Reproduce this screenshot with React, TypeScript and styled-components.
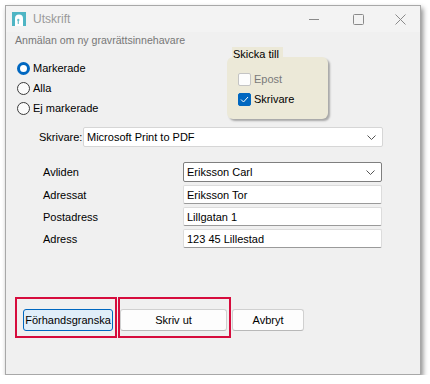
import React from "react";
import styled, { createGlobalStyle } from "styled-components";

const Global = createGlobalStyle`
  html, body { margin: 0; padding: 0; background: #ffffff; }
  body { font-family: "Liberation Sans", Arial, sans-serif; font-size: 11px; color: #000; }
  * { box-sizing: border-box; }
`;

const Window = styled.div`
  margin: 5px 0 0 5px;
  width: 416px;
  height: 370px;
  border: 1px solid #a8a8a8;
  background: #f0f0f0;
  box-shadow: 2px 3px 5px rgba(0, 0, 0, 0.45);
  display: flex;
  flex-direction: column;
`;

const TitleBar = styled.div`
  height: 26px;
  background: #f3f3f3;
  display: flex;
  align-items: center;
  padding-left: 6px;
`;

const TitleText = styled.span`
  margin-left: 7px;
  font-size: 12px;
  color: #9a9a9a;
`;

const Controls = styled.div`
  margin-left: auto;
  display: flex;
  height: 100%;
`;

const CtrlButton = styled.div<{ $w: number }>`
  width: ${(p) => p.$w}px;
  height: 100%;
  display: flex;
  align-items: center;
  justify-content: center;
`;

const Body = styled.div`
  flex: 1;
  padding: 2px 0 0 9px;
  display: flex;
  flex-direction: column;
`;

const Caption = styled.div`
  font-size: 10.6px;
  line-height: 13px;
  height: 13px;
  color: #777777;
`;

const TopRow = styled.div`
  display: grid;
  grid-template-columns: 212px 104px;
  height: 72px;
`;

const RadioList = styled.div`
  padding: 11px 0 0 2px;
  display: flex;
  flex-direction: column;
`;

const OptionRow = styled.label`
  height: 20px;
  display: flex;
  align-items: center;
  gap: 3px;
  font-size: 11px;
`;

const Radio = styled.span<{ $on?: boolean }>`
  width: 13px;
  height: 13px;
  border-radius: 50%;
  flex: none;
  background: ${(p) => (p.$on ? "#ffffff" : "#fbfbfb")};
  border: ${(p) => (p.$on ? "3.5px solid #0067c0" : "1px solid #3a3a3a")};
`;

const GroupWrap = styled.div`
  position: relative;
  padding-top: 10px;
`;

const GroupPanel = styled.div`
  width: 101px;
  height: 62px;
  background: #ece9d8;
  border-radius: 6px;
  box-shadow: 2px 2px 2px rgba(0, 0, 0, 0.3);
  padding: 12px 0 0 11px;
  display: flex;
  flex-direction: column;
`;

const GroupLabel = styled.span`
  position: absolute;
  top: 0;
  left: 5px;
  height: 15px;
  padding: 0 4px 0 1px;
  line-height: 15px;
  background: #ece9d8;
  font-size: 11px;
`;

const CheckRow = styled.label<{ $disabled?: boolean }>`
  height: 20px;
  display: flex;
  align-items: center;
  gap: 3px;
  font-size: 11px;
  color: ${(p) => (p.$disabled ? "#7a7a7a" : "#000")};
`;

const CheckBox = styled.span<{ $on?: boolean }>`
  width: 13px;
  height: 13px;
  flex: none;
  border-radius: 2px;
  background: ${(p) => (p.$on ? "#0067c0" : "#fdfdfd")};
  border: 1px solid ${(p) => (p.$on ? "#0067c0" : "#c4c4c4")};
  display: flex;
  align-items: center;
  justify-content: center;
`;

const PrinterRow = styled.div`
  margin-top: 8px;
  height: 20px;
  display: flex;
  align-items: center;
`;

const PrinterLabel = styled.span`
  width: 44px;
  margin-left: 24px;
  font-size: 11px;
`;

const Select = styled.div<{ $w: number; $dark?: boolean }>`
  width: ${(p) => p.$w}px;
  height: 100%;
  background: #ffffff;
  border: 1px solid ${(p) => (p.$dark ? "#7f7f7f" : "#d6d6d6")};
  border-radius: 2px;
  display: flex;
  align-items: center;
  padding: 0 6px 0 3px;
  font-size: 11px;
`;

const Chevron = styled.svg`
  margin-left: auto;
`;

const FieldGrid = styled.div`
  margin-top: 15px;
  margin-left: 28px;
  display: grid;
  grid-template-columns: 140px 199px;
  grid-template-rows: 20px 19px 19px 19px;
  row-gap: 3px;
  align-items: center;
`;

const FieldLabel = styled.span`
  font-size: 11px;
`;

const TextBox = styled.div`
  height: 100%;
  background: #ffffff;
  border: 1px solid #dcdcdc;
  border-bottom-color: #9a9a9a;
  border-radius: 2px;
  display: flex;
  align-items: center;
  padding-left: 3px;
  font-size: 11px;
`;

const ButtonRow = styled.div`
  margin-top: 49px;
  display: flex;
  align-items: flex-start;
`;

const Highlight = styled.div<{ $w: number; $pl: number; $ml: number }>`
  width: ${(p) => p.$w}px;
  height: 41px;
  margin-left: ${(p) => p.$ml}px;
  border: 2px solid #d60c3d;
  padding: 10px 0 0 ${(p) => p.$pl}px;
`;

const Button = styled.div<{ $w: number; $primary?: boolean; $ml?: number }>`
  width: ${(p) => p.$w}px;
  height: 22px;
  margin-left: ${(p) => p.$ml ?? 0}px;
  margin-top: ${(p) => (p.$ml ? 12 : 0)}px;
  border-radius: 3px;
  display: flex;
  align-items: center;
  justify-content: center;
  font-size: 11px;
  white-space: nowrap;
  background: ${(p) => (p.$primary ? "#e0eef9" : "#fdfdfd")};
  border: 1px solid ${(p) => (p.$primary ? "#0067c0" : "#d0d0d0")};
  border-bottom-color: ${(p) => (p.$primary ? "#0067c0" : "#b8b8b8")};
`;

const TitleIcon = () => (
  <svg width="14" height="14" viewBox="0 0 14 14">
    <rect x="0" y="0" width="14" height="14" fill="#4fb5c4" />
    <path d="M3 14 V6.5 A4 4 0 0 1 11 6.5 V14 Z" fill="#ffffff" />
    <path d="M5 8 H7.5 M6.25 6.8 V12" stroke="#4fb5c4" strokeWidth="1" />
  </svg>
);

const ChevronIcon = () => (
  <Chevron width="9" height="5" viewBox="0 0 9 5">
    <path d="M0.5 0.5 L4.5 4.5 L8.5 0.5" fill="none" stroke="#555" strokeWidth="1" />
  </Chevron>
);

export default function App() {
  return (
    <>
      <Global />
      <Window>
        <TitleBar>
          <TitleIcon />
          <TitleText>Utskrift</TitleText>
          <Controls>
            <CtrlButton $w={44}>
              <svg width="10" height="1" viewBox="0 0 10 1">
                <rect width="10" height="1" fill="#8a8a8a" />
              </svg>
            </CtrlButton>
            <CtrlButton $w={44}>
              <svg width="11" height="11" viewBox="0 0 11 11">
                <rect x="0.5" y="0.5" width="10" height="10" rx="1" fill="none" stroke="#8a8a8a" />
              </svg>
            </CtrlButton>
            <CtrlButton $w={40}>
              <svg width="11" height="11" viewBox="0 0 11 11">
                <path d="M0.5 0.5 L10.5 10.5 M10.5 0.5 L0.5 10.5" stroke="#8a8a8a" strokeWidth="1" />
              </svg>
            </CtrlButton>
          </Controls>
        </TitleBar>
        <Body>
          <Caption>Anmälan om ny gravrättsinnehavare</Caption>
          <TopRow>
            <RadioList>
              <OptionRow>
                <Radio $on />
                Markerade
              </OptionRow>
              <OptionRow>
                <Radio />
                Alla
              </OptionRow>
              <OptionRow>
                <Radio />
                Ej markerade
              </OptionRow>
            </RadioList>
            <GroupWrap>
              <GroupLabel>Skicka till</GroupLabel>
              <GroupPanel>
                <CheckRow $disabled>
                  <CheckBox />
                  Epost
                </CheckRow>
                <CheckRow>
                  <CheckBox $on>
                    <svg width="9" height="7" viewBox="0 0 9 7">
                      <path d="M1 3.5 L3.5 6 L8 1" fill="none" stroke="#fff" strokeWidth="1" />
                    </svg>
                  </CheckBox>
                  Skrivare
                </CheckRow>
              </GroupPanel>
            </GroupWrap>
          </TopRow>
          <PrinterRow>
            <PrinterLabel>Skrivare:</PrinterLabel>
            <Select $w={300}>
              Microsoft Print to PDF
              <ChevronIcon />
            </Select>
          </PrinterRow>
          <FieldGrid>
            <FieldLabel>Avliden</FieldLabel>
            <Select $w={199} $dark>
              Eriksson Carl
              <ChevronIcon />
            </Select>
            <FieldLabel>Adressat</FieldLabel>
            <TextBox>Eriksson Tor</TextBox>
            <FieldLabel>Postadress</FieldLabel>
            <TextBox>Lillgatan 1</TextBox>
            <FieldLabel>Adress</FieldLabel>
            <TextBox>123 45 Lillestad</TextBox>
          </FieldGrid>
          <ButtonRow>
            <Highlight $w={102} $pl={6} $ml={0}>
              <Button $w={90} $primary>
                Förhandsgranska
              </Button>
            </Highlight>
            <Highlight $w={113} $pl={0} $ml={1}>
              <Button $w={107}>Skriv ut</Button>
            </Highlight>
            <Button $w={72} $ml={1}>
              Avbryt
            </Button>
          </ButtonRow>
        </Body>
      </Window>
    </>
  );
}
